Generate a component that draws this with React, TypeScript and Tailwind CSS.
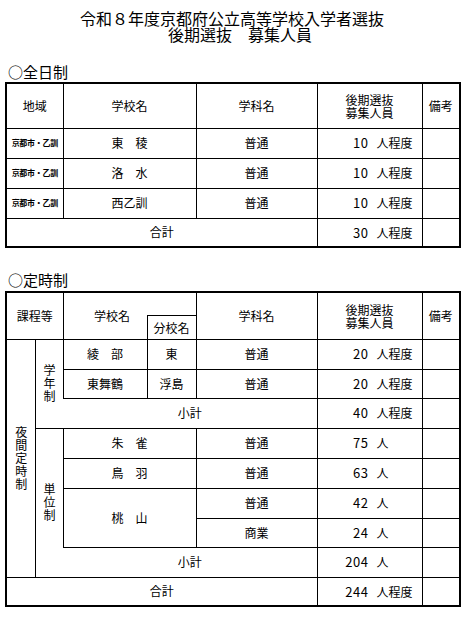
import React from "react";

const font = { fontFamily: '"Noto Sans CJK JP", "Noto Sans", sans-serif' };

const cell = "border border-black text-center align-middle p-0";

const Vertical = ({ text }: { text: string }) => (
  <span className="inline-block align-middle [writing-mode:vertical-rl] [text-orientation:upright] tracking-[1px] leading-[14px]">
    {text}
  </span>
);

const Count = ({ n, approx }: { n: string; approx?: boolean }) => (
  <td className={`${cell} text-right pr-[9px]`}>
    <span className="text-[13px] tracking-[0.5px]">{n}</span>
    <span className="ml-[8px]">人</span>
    <span className={approx ? "" : "invisible"}>程度</span>
  </td>
);

const fullDay = [
  { area: "京都市・乙訓", school: "東　稜", dept: "普通", n: "10" },
  { area: "京都市・乙訓", school: "洛　水", dept: "普通", n: "10" },
  { area: "京都市・乙訓", school: "西乙訓", dept: "普通", n: "10" },
];

const Title = () => (
  <div className="pt-[10px] text-[16px] leading-[16px] text-center">
    <div className="pr-[4px]">令和８年度京都府公立高等学校入学者選抜</div>
    <div className="pl-[12px]">後期選抜　募集人員</div>
  </div>
);

const FullDayTable = () => (
  <table className="ml-[5px] mt-[2px] w-[454px] table-fixed border-collapse border-2 border-black text-[12px]">
    <colgroup>
      <col className="w-[57px]" />
      <col className="w-[133px]" />
      <col className="w-[121px]" />
      <col className="w-[105px]" />
      <col className="w-[38px]" />
    </colgroup>
    <tbody>
      <tr className="h-[45px]">
        <td className={cell}>地域</td>
        <td className={cell}>学校名</td>
        <td className={cell}>学科名</td>
        <td className={`${cell} leading-[13px]`}>
          後期選抜
          <br />
          募集人員
        </td>
        <td className={cell}>備考</td>
      </tr>
      {fullDay.map((r, i) => (
        <tr key={i} className="h-[30px]">
          <td className={`${cell} text-[8px] font-bold tracking-[-0.3px]`}>{r.area}</td>
          <td className={cell}>{r.school}</td>
          <td className={cell}>{r.dept}</td>
          <Count n={r.n} approx />
          <td className={cell}></td>
        </tr>
      ))}
      <tr className="h-[29px]">
        <td className={cell} colSpan={3}>
          合計
        </td>
        <Count n="30" approx />
        <td className={cell}></td>
      </tr>
    </tbody>
  </table>
);

const PartTimeTable = () => (
  <table className="ml-[5px] mt-[3px] w-[454px] table-fixed border-collapse border-2 border-black text-[12px]">
    <colgroup>
      <col className="w-[29px]" />
      <col className="w-[28px]" />
      <col className="w-[84px]" />
      <col className="w-[49px]" />
      <col className="w-[121px]" />
      <col className="w-[105px]" />
      <col className="w-[38px]" />
    </colgroup>
    <tbody>
      <tr className="h-[23px]">
        <td className={cell} colSpan={2} rowSpan={2}>
          課程等
        </td>
        <td className={`${cell} border-r-0 pl-[14px]`} rowSpan={2}>
          学校名
        </td>
        <td className="border-t border-b border-black p-0"></td>
        <td className={cell} rowSpan={2}>
          学科名
        </td>
        <td className={`${cell} leading-[13px]`} rowSpan={2}>
          後期選抜
          <br />
          募集人員
        </td>
        <td className={cell} rowSpan={2}>
          備考
        </td>
      </tr>
      <tr className="h-[24px]">
        <td className={`${cell} pt-[2px]`}>分校名</td>
      </tr>

      <tr className="h-[30px]">
        <td className={cell} rowSpan={8}>
          <Vertical text="夜間定時制" />
        </td>
        <td className={`${cell} border-r-0`} rowSpan={3}>
          <Vertical text="学年制" />
        </td>
        <td className={cell}>綾　部</td>
        <td className={cell}>東</td>
        <td className={cell}>普通</td>
        <Count n="20" approx />
        <td className={cell}></td>
      </tr>
      <tr className="h-[29px]">
        <td className={cell}>東舞鶴</td>
        <td className={cell}>浮島</td>
        <td className={cell}>普通</td>
        <Count n="20" approx />
        <td className={cell}></td>
      </tr>
      <tr className="h-[30px]">
        <td className={`${cell} border-l-0`} colSpan={3}>
          小計
        </td>
        <Count n="40" approx />
        <td className={cell}></td>
      </tr>

      <tr className="h-[30px]">
        <td className={`${cell} border-r-0`} rowSpan={5}>
          <Vertical text="単位制" />
        </td>
        <td className={cell} colSpan={2}>
          朱　雀
        </td>
        <td className={cell}>普通</td>
        <Count n="75" />
        <td className={cell}></td>
      </tr>
      <tr className="h-[30px]">
        <td className={cell} colSpan={2}>
          鳥　羽
        </td>
        <td className={cell}>普通</td>
        <Count n="63" />
        <td className={cell}></td>
      </tr>
      <tr className="h-[30px]">
        <td className={cell} colSpan={2} rowSpan={2}>
          桃　山
        </td>
        <td className={cell}>普通</td>
        <Count n="42" />
        <td className={cell}></td>
      </tr>
      <tr className="h-[29px]">
        <td className={cell}>商業</td>
        <Count n="24" />
        <td className={cell}></td>
      </tr>
      <tr className="h-[30px]">
        <td className={`${cell} border-l-0`} colSpan={3}>
          小計
        </td>
        <Count n="204" />
        <td className={cell}></td>
      </tr>

      <tr className="h-[29px]">
        <td className={cell} colSpan={5}>
          合計
        </td>
        <Count n="244" approx />
        <td className={cell}></td>
      </tr>
    </tbody>
  </table>
);

export default function App() {
  return (
    <div className="w-[468px] h-[640px] bg-white text-black" style={font}>
      <Title />
      <div className="mt-[22px] pl-[8px] text-[15px] leading-[16px]">○全日制</div>
      <FullDayTable />
      <div className="mt-[24px] pl-[8px] text-[15px] leading-[16px]">○定時制</div>
      <PartTimeTable />
    </div>
  );
}
